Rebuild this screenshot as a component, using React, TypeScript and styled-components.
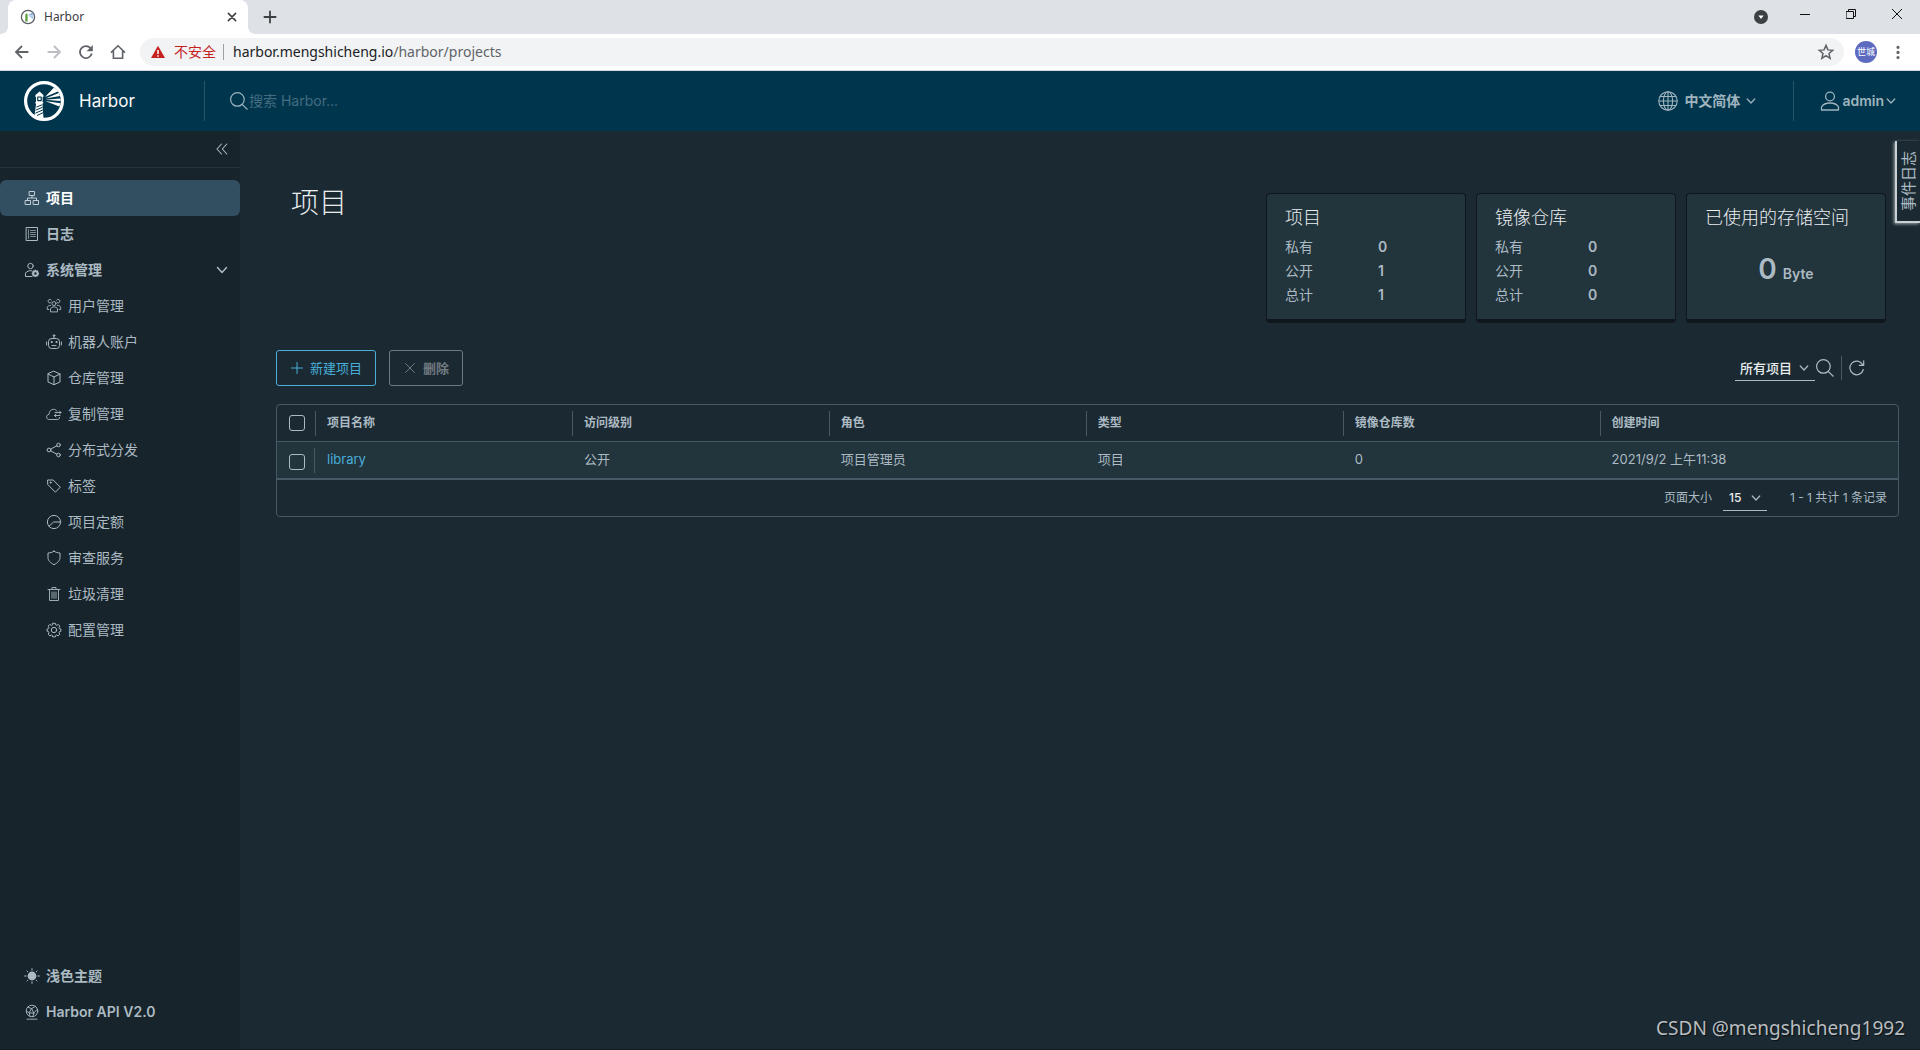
import React from "react";
import styled, { createGlobalStyle, css } from "styled-components";

const color = {
  header: "#00364d",
  side: "#17242b",
  page: "#1b2a32",
  active: "#324f62",
  card: "#22343c",
  cardEdge: "#0f171c",
  line: "#495865",
  text: "#acbac3",
  bright: "#eaedf0",
  link: "#49afd9",
  disabled: "#6f7980",
};

const appFont = `Inter, "Noto Sans CJK SC", sans-serif`;
const chromeFont = `"Noto Sans", "Noto Sans CJK SC", sans-serif`;

const GlobalStyle = createGlobalStyle`
  *, *::before, *::after { box-sizing: border-box; }
  body { margin: 0; background: ${color.page}; color: ${color.text}; font: 400 13px/24px ${appFont}; }
  button, input, select { font: inherit; color: inherit; margin: 0; }
  a { color: inherit; text-decoration: none; }
`;

/* ---------- shared ---------- */

const Svg = styled.svg<{ $size: number }>`
  width: ${(p) => p.$size}px;
  height: ${(p) => p.$size}px;
  flex: none;
  display: block;
  fill: none;
  stroke: currentColor;
  stroke-linecap: round;
  stroke-linejoin: round;
`;

type IconProps = { size?: number; box?: number; stroke?: number; children: React.ReactNode };
const Icon = ({ size = 16, box = 16, stroke = 1, children }: IconProps) => (
  <Svg $size={size} viewBox={`0 0 ${box} ${box}`} strokeWidth={stroke} aria-hidden="true">
    {children}
  </Svg>
);

const Chevron = ({ size = 10 }: { size?: number }) => (
  <Icon size={size} box={8} stroke={1}>
    <path d="M1 2.4 4 5.6 7 2.4" />
  </Icon>
);

const Magnifier = () => (
  <Icon size={20} box={20} stroke={1.2}>
    <circle cx="8.4" cy="8.4" r="6.8" />
    <path d="m13.4 13.6 4.8 4.6" />
  </Icon>
);

const PlainButton = styled.button`
  display: flex;
  align-items: center;
  justify-content: center;
  padding: 0;
  border: 0;
  background: none;
  cursor: pointer;
`;

const Page = styled.div`
  display: flex;
  flex-direction: column;
  min-height: 100vh;
  position: relative;
  border-bottom: 1px solid #131e24;
`;

/* ---------- browser frame ---------- */

const TabStrip = styled.div`
  display: flex;
  align-items: center;
  height: 34px;
  padding-left: 8px;
  background: #dee1e6;
  color: #3c4043;
  font: 400 12px/16px ${chromeFont};
`;

const Tab = styled.div`
  display: flex;
  align-items: center;
  width: 240px;
  height: 34px;
  padding: 0 10px 0 12px;
  gap: 8px;
  background: #fff;
  border-radius: 8px 8px 0 0;
  position: relative;
  &::before, &::after {
    content: "";
    position: absolute;
    bottom: 0;
    width: 8px;
    height: 8px;
  }
  &::before { left: -8px; background: radial-gradient(circle at 0 0, #dee1e6 8px, #fff 8px); }
  &::after { right: -8px; background: radial-gradient(circle at 100% 0, #dee1e6 8px, #fff 8px); }
`;

const TabTitle = styled.span`
  flex: 1;
`;

const NewTab = styled(PlainButton)`
  width: 28px;
  height: 28px;
  margin-left: 8px;
`;

const WindowControls = styled.div`
  display: flex;
  margin-left: auto;
  height: 100%;
  color: #111;
`;

const WindowButton = styled(PlainButton)`
  width: 46px;
  height: 28px;
`;

const CircleButton = styled(PlainButton)`
  width: 42px;
  height: 34px;
`;

const AddressRow = styled.div`
  display: flex;
  align-items: center;
  height: 37px;
  padding-left: 6px;
  padding-right: 6px;
  background: #fff;
  border-bottom: 1px solid #d5d7db;
  color: #5f6368;
  font: 400 14px/20px ${chromeFont};
`;

const NavButton = styled(PlainButton)<{ $dim?: boolean }>`
  width: 32px;
  height: 28px;
  color: ${(p) => (p.$dim ? "#bdbfc2" : "#5f6368")};
`;

const AddressBar = styled.div`
  flex: 1;
  display: flex;
  align-items: center;
  height: 28px;
  margin-left: 6px;
  padding: 0 8px 0 11px;
  border-radius: 14px;
  background: #f1f3f4;
`;

const Insecure = styled.span`
  color: #c5221f;
  padding: 0 7px 0 9px;
  line-height: 16px;
`;

const Address = styled.span`
  flex: 1;
  padding-left: 9px;
  border-left: 1px solid #9aa0a6;
  line-height: 16px;
  b { font-weight: 400; color: #202124; }
`;

const Avatar = styled(PlainButton)`
  width: 22px;
  height: 22px;
  margin: 0 5px 0 11px;
  border-radius: 50%;
  background: #5c6bc0;
  color: #fff;
  font-size: 9px;
  line-height: 22px;
`;

const Favicon = () => (
  <Icon size={16}>
    <circle cx="8" cy="8" r="6.6" stroke="#5a6064" strokeWidth="1.3" />
    <path d="M5.4 5.5 6.5 4.2l1.1 1.3v7H5.2Z" fill="#5f9e41" stroke="none" />
    <path d="m8.6 5.6 4-2.2 1.3 3-5.3.1ZM8.6 7.2l5 .2-.8 2.2Z" fill="#8eb6e0" stroke="none" />
  </Icon>
);

const BrowserFrame = () => (
  <header>
    <TabStrip>
      <Tab>
        <Favicon />
        <TabTitle>Harbor</TabTitle>
        <PlainButton aria-label="关闭标签页">
          <Icon size={12} box={12} stroke={1.6}>
            <path d="m2.4 2.4 7.2 7.2M9.6 2.4 2.4 9.6" />
          </Icon>
        </PlainButton>
      </Tab>
      <NewTab aria-label="新标签页">
        <Icon size={14} box={14} stroke={1.8}>
          <path d="M7 1.4v11.2M1.4 7h11.2" />
        </Icon>
      </NewTab>
      <WindowControls>
        <CircleButton aria-label="标签页列表">
          <Icon size={14} box={14}>
            <circle cx="7" cy="7" r="7" fill="#3c4043" stroke="none" />
            <path d="M4.4 5.4h5.2L7 9Z" fill="#fff" stroke="none" />
          </Icon>
        </CircleButton>
        <WindowButton aria-label="最小化">
          <Icon size={10} box={10}><path d="M0 5.5h10" strokeLinecap="butt" /></Icon>
        </WindowButton>
        <WindowButton aria-label="还原">
          <Icon size={10} box={10}>
            <path d="M.5 2.5h7v7h-7ZM2.5 2.5v-2h7v7h-2" strokeLinejoin="miter" />
          </Icon>
        </WindowButton>
        <WindowButton aria-label="关闭">
          <Icon size={10} box={10}><path d="m0 0 10 10M10 0 0 10" /></Icon>
        </WindowButton>
      </WindowControls>
    </TabStrip>
    <AddressRow>
      <NavButton aria-label="后退">
        <Icon stroke={1.8}><path d="M14.4 8H2M8 2 2 8l6 6" strokeLinecap="butt" strokeLinejoin="miter" /></Icon>
      </NavButton>
      <NavButton aria-label="前进" $dim>
        <Icon stroke={1.8}><path d="M1.6 8H14M8 2l6 6-6 6" strokeLinecap="butt" strokeLinejoin="miter" /></Icon>
      </NavButton>
      <NavButton aria-label="重新加载">
        <Icon stroke={1.8}>
          <path d="M13.8 9.6A6 6 0 1 1 12.4 4" strokeLinecap="butt" />
          <path d="M14.8 1v6.2H8.6Z" fill="currentColor" stroke="none" />
        </Icon>
      </NavButton>
      <NavButton aria-label="主页">
        <Icon stroke={1.6}><path d="M1 8.6 8 1.8l7 6.8M3.4 7v7.2h9.2V7" strokeLinecap="butt" strokeLinejoin="miter" /></Icon>
      </NavButton>
      <AddressBar>
        <Icon size={14} box={14}>
          <path d="M7 .8 14 13H0Z" fill="#c5221f" stroke="none" />
          <path d="M7 5v4M7 10.2v1.6" stroke="#fff" strokeWidth="1.5" strokeLinecap="butt" />
        </Icon>
        <Insecure>不安全</Insecure>
        <Address><b>harbor.mengshicheng.io</b>/harbor/projects</Address>
        <PlainButton aria-label="收藏">
          <Icon size={20} box={20} stroke={1.5}>
            <path d="m10 3.4 1.9 4.5 4.8.4-3.7 3.2 1.1 4.8-4.1-2.6-4.1 2.6L7 11.5 3.3 8.3l4.8-.4Z" strokeLinejoin="miter" />
          </Icon>
        </PlainButton>
      </AddressBar>
      <Avatar aria-label="个人资料">世城</Avatar>
      <NavButton aria-label="菜单">
        <Icon><path d="M8 3.3v.01M8 8.4v.01M8 13.5v.01" strokeWidth="3.2" /></Icon>
      </NavButton>
    </AddressRow>
  </header>
);

/* ---------- application header ---------- */

const Header = styled.header`
  display: flex;
  align-items: center;
  height: 60px;
  background: ${color.header};
`;

const Brand = styled.a`
  display: flex;
  align-items: center;
  gap: 15px;
  width: 205px;
  height: 40px;
  padding-left: 24px;
  border-right: 1px solid #24556b;
  color: #fafafa;
  font-size: 17px;
`;

const SearchBox = styled.label`
  flex: 1;
  display: flex;
  align-items: center;
  padding-left: 24px;
  color: #9cb2bd;
`;

const SearchInput = styled.input`
  width: 240px;
  padding: 0;
  border: 0;
  outline: 0;
  background: none;
  font-size: 14px;
  line-height: 24px;
  &::placeholder { color: #456c80; opacity: 1; }
`;

const HeaderMenu = styled(PlainButton)<{ $user?: boolean }>`
  height: 40px;
  gap: 6px;
  font-size: 14px;
  font-weight: 600;
  color: #9fb4be;
  ${(p) =>
    p.$user
      ? css`
          border-left: 1px solid #24556b;
          padding: 0 24px 0 26px;
          gap: 2px;
        `
      : css`
          padding: 0 37px 0 0;
        `}
`;

const HarborLogo = () => (
  <Icon size={40} box={40}>
    <circle cx="20" cy="20" r="18.4" stroke="#fff" strokeWidth="3.2" />
    <path d="M15.600 10.400 11.400 14v2h.6v5h-.7v1.500h.8l-1.700 13.200q4.600 3 9.200 2.700L18.400 22.500h.8V21h-.6v-5h.8v-2Z" fill="#fff" stroke="none" />
    <path d="M13.800 16h3.400v3.600h-3.400Z" stroke="#00364d" strokeWidth="1.200" />
    <path d="m12.600 26 5-2M12.200 29l6-2.600M11.800 32l6.800-3M13.400 34.400l5.400-2.600" stroke="#00364d" />
    <path d="m21 16 9-9.500 4.500 3.700ZM21.500 17.400l13.300-5.400 1.200 3ZM21.500 18.700l15-1.200v2.400ZM21.200 20l15.300 2.200-1.200 3.400Z" fill="#fff" stroke="none" />
  </Icon>
);

const AppHeader = () => (
  <Header>
    <Brand href="#"><HarborLogo />Harbor</Brand>
    <SearchBox>
      <Magnifier />
      <SearchInput aria-label="搜索" placeholder="搜索 Harbor..." />
    </SearchBox>
    <HeaderMenu>
      <Icon size={20} box={20} stroke={1.1}>
        <circle cx="10" cy="10" r="9.2" />
        <ellipse cx="10" cy="10" rx="4.6" ry="9.2" />
        <path d="M10 .8v18.400M2.300 5.500h15.400M.8 10h18.400M2.300 14.500h15.400" />
      </Icon>
      中文简体
      <Chevron />
    </HeaderMenu>
    <HeaderMenu $user>
      <Icon size={20} box={20} stroke={1.3}>
        <circle cx="10" cy="5.5" r="4.4" />
        <path d="M1.500 19v-3c1.500-2.800 5-4 8.500-4s7 1.200 8.500 4v3Z" />
      </Icon>
      admin
      <Chevron />
    </HeaderMenu>
  </Header>
);

/* ---------- sidebar ---------- */

const Body = styled.div`
  flex: 1;
  display: flex;
`;

const Side = styled.nav`
  display: flex;
  flex-direction: column;
  flex: none;
  width: 240px;
  padding-bottom: 19px;
  background: ${color.side};
`;

const CollapseRow = styled.div`
  display: flex;
  justify-content: flex-end;
  height: 37px;
  padding-right: 10px;
  margin-bottom: 12px;
  border-bottom: 1px solid #23343d;
`;

const NavItem = styled.a<{ $sub?: boolean; $active?: boolean }>`
  display: flex;
  align-items: center;
  gap: 6px;
  height: 36px;
  padding: 0 12px 0 ${(p) => (p.$sub ? 46 : 24)}px;
  font-size: 14px;
  font-weight: ${(p) => (p.$sub ? 400 : p.$active ? 700 : 600)};
  border-radius: 6px;
  ${(p) =>
    p.$active &&
    css`
      background: ${color.active};
      color: #fff;
      svg { color: #c3ced5; }
    `}
`;

const Grow = styled.span`
  flex: 1;
`;

const SideFooter = styled.div`
  margin-top: auto;
`;

const icons = {
  projects: (
    <Icon>
      <path d="M5.500 1.500h5v4h-5ZM1.500 10.500h5v4h-5ZM9.500 10.500h5v4h-5ZM8 5.500v2.300M3.500 10V8h9v2" strokeLinejoin="miter" />
    </Icon>
  ),
  logs: (
    <Icon>
      <path d="M2.500 1.500h11v13h-11Z" strokeLinejoin="miter" />
      <path d="M4.500 3.500v9M6.500 4.500h5M6.500 6.500h5M6.500 8.500h5M6.500 10.500h5" strokeWidth=".7" />
    </Icon>
  ),
  admin: (
    <Icon>
      <circle cx="6.500" cy="4" r="2.700" />
      <path d="M8 14.500H1.500v-3.400C2.700 9.300 5 8.500 7.500 8.700" />
      <circle cx="11.400" cy="11.400" r="2.200" strokeWidth="1.900" />
      <path d="M11.400 7.700v1.500M11.400 13.600v1.500M7.700 11.400h1.500M13.600 11.400h1.500M8.800 8.800l1 1M13 13l1 1M14 8.800l-1 1M9.800 13l-1 1" strokeWidth="1.500" strokeLinecap="butt" />
    </Icon>
  ),
  users: (
    <Icon stroke={0.9}>
      <circle cx="8" cy="5.600" r="2" />
      <path d="M4.500 13.500v-2.700c.6-1.300 2-1.900 3.500-1.900s2.900.6 3.500 1.900v2.700Z" />
      <path d="M5 4.600A1.800 1.800 0 1 1 5.400 2.200M11 4.600a1.800 1.800 0 1 0-.4-2.400M4.600 7.400C3 7.300 1.800 8 1.300 9.200v2.300h1.500M11.400 7.400c1.600-.1 2.800.6 3.300 1.800v2.300h-1.500" />
    </Icon>
  ),
  robot: (
    <Icon>
      <rect x="2.500" y="4.500" width="11" height="10" rx="3" />
      <path d="M8 4.500V2M.6 8v3M15.400 8v3M6 11.600h4" />
      <circle cx="8" cy="1.500" r=".8" />
      <circle cx="5.600" cy="8" r=".6" fill="currentColor" />
      <circle cx="10.400" cy="8" r=".6" fill="currentColor" />
    </Icon>
  ),
  cube: (
    <Icon>
      <path d="m8 1.300 6 2.700v8L8 14.700 2 12V4ZM2 4l6 3 6-3M8 7v7.700" />
    </Icon>
  ),
  replicate: (
    <Icon stroke={0.9}>
      <path d="M13.500 11.500c0 1.500-1 2-2.200 2H3.200C1.700 13.500.6 12.300.6 11s1-2.400 2.400-2.500C3 5.500 5 3.300 7.500 3.300c1.500 0 2.700.7 3.400 1.800" />
      <path d="M9 6.500h6M13.500 5 15 6.500 13.500 8M14 9.500H8.500M10 8 8.500 9.500 10 11" />
    </Icon>
  ),
  share: (
    <Icon>
      <circle cx="3" cy="8" r="1.900" />
      <circle cx="12.500" cy="3" r="1.800" />
      <circle cx="12.500" cy="13" r="1.800" />
      <path d="m4.700 7.100 6.200-3.300M4.700 8.900l6.200 3.300" />
    </Icon>
  ),
  tag: (
    <Icon>
      <path d="M2 2h5.200l7.100 7.200-4.900 5L2 6.800Z" />
      <circle cx="4.600" cy="4.600" r=".6" />
    </Icon>
  ),
  quota: (
    <Icon>
      <circle cx="8" cy="8" r="6.600" />
      <path d="M3 12.300 7.500 8h7" />
    </Icon>
  ),
  shield: (
    <Icon>
      <path d="M8 1.200c1.800 1.200 3.800 1.700 6 1.800v4.500c0 3.200-2.600 5.500-6 7.200-3.400-1.700-6-4-6-7.200V3c2.200-.1 4.200-.6 6-1.800Z" />
    </Icon>
  ),
  trash: (
    <Icon>
      <path d="M2 3.500h12M3.500 3.500v11h9v-11M6 3.300V1.500h4v1.800M6 6v6.300M8 6v6.300M10 6v6.300" strokeWidth=".9" />
    </Icon>
  ),
  gear: (
    <Icon>
      <circle cx="8" cy="8" r="2.700" />
      <path d="m6.700 1.300h2.600l.4 1.600 1 .4 1.500-.9 1.600 1.700-.8 1.500.4 1 1.500.4v2.300l-1.500.4-.4 1 .8 1.500-1.700 1.700-1.400-.9-1 .4-.4 1.500H6.700l-.4-1.500-1-.4-1.500.9-1.600-1.700.8-1.500-.4-1-1.500-.4V7l1.500-.4.4-1-.8-1.500 1.600-1.700 1.500.9 1-.4Z" />
    </Icon>
  ),
  sun: (
    <Icon>
      <circle cx="8" cy="8" r="4.400" fill="currentColor" stroke="none" />
      <path d="M8 .6v1.600M8 13.800v1.600M.6 8h1.600M13.800 8h1.600M3 3l.8.8M12.200 12.200l.8.8M13 3l-.8.800M3 13l.8-.8" />
    </Icon>
  ),
  api: (
    <Icon stroke={0.9}>
      <circle cx="8" cy="7" r="5.800" />
      <path d="M3 15.200h10M4 3.200l3.600 1.400 3.600-2.200M7.600 4.600 5.200 8.800l4.600.4 3-3.500M2.600 7.200l2.600 1.600.8 3.600M9.800 9.200l-1 3.500M7.600 4.600l2.200 4.600" />
    </Icon>
  ),
};

const adminItems: [React.ReactNode, string][] = [
  [icons.users, "用户管理"],
  [icons.robot, "机器人账户"],
  [icons.cube, "仓库管理"],
  [icons.replicate, "复制管理"],
  [icons.share, "分布式分发"],
  [icons.tag, "标签"],
  [icons.quota, "项目定额"],
  [icons.shield, "审查服务"],
  [icons.trash, "垃圾清理"],
  [icons.gear, "配置管理"],
];

const Sidebar = () => (
  <Side>
    <CollapseRow>
      <PlainButton aria-label="收起">
        <Icon stroke={1.1}><path d="M7.500 3 3 8l4.500 5M12.800 3 8.300 8l4.500 5" /></Icon>
      </PlainButton>
    </CollapseRow>
    <NavItem href="#" $active>{icons.projects}项目</NavItem>
    <NavItem href="#">{icons.logs}日志</NavItem>
    <NavItem href="#">
      {icons.admin}
      <Grow>系统管理</Grow>
      <Chevron size={12} />
    </NavItem>
    {adminItems.map(([icon, label]) => (
      <NavItem key={label} href="#" $sub>{icon}{label}</NavItem>
    ))}
    <SideFooter>
      <NavItem href="#">{icons.sun}浅色主题</NavItem>
      <NavItem href="#">{icons.api}Harbor API V2.0</NavItem>
    </SideFooter>
  </Side>
);

/* ---------- project list ---------- */

const Main = styled.main`
  flex: 1;
  min-width: 0;
  padding: 52px 21px 48px 36px;
`;

const TitleRow = styled.div`
  display: flex;
  justify-content: space-between;
  padding: 0 13px 0 15px;
`;

const Title = styled.h1`
  margin: 0;
  font-size: 28px;
  font-weight: 300;
  line-height: 40px;
  color: ${color.bright};
`;

const Cards = styled.div`
  display: flex;
  gap: 10px;
  margin-top: 10px;
`;

const Card = styled.section`
  width: 200px;
  padding: 11px 18px 12px;
  border: 1px solid ${color.cardEdge};
  border-bottom-width: 4px;
  border-radius: 4px;
  background: ${color.card};
`;

const CardTitle = styled.h2`
  margin: 0 0 4px;
  font-size: 18px;
  font-weight: 300;
  line-height: 26px;
  white-space: nowrap;
  color: ${color.bright};
`;

const Stats = styled.dl`
  display: grid;
  grid-template-columns: 93px 1fr;
  margin: 0;
  font-size: 14px;
  dd { margin: 0; font-weight: 600; }
`;

const Storage = styled.p`
  display: flex;
  align-items: baseline;
  justify-content: center;
  gap: 6px;
  margin: 0;
  padding-top: 14px;
  font-size: 14px;
  font-weight: 600;
  line-height: 40px;
  strong { font-size: 28px; font-weight: 600; }
`;

const Toolbar = styled.div`
  display: flex;
  align-items: center;
  gap: 13px;
  margin: 27px 0 18px;
`;

const ActionButton = styled.button`
  display: flex;
  align-items: center;
  gap: 6px;
  height: 36px;
  padding: 0 13px;
  border: 1px solid ${color.link};
  border-radius: 3px;
  background: none;
  color: ${color.link};
  &:disabled { border-color: ${color.disabled}; color: ${color.disabled}; font-weight: 600; }
`;

const Filters = styled.div`
  display: flex;
  align-items: center;
  margin-left: auto;
  padding-right: 33px;
`;

const SelectWrap = styled.span<{ $pad: number; $width: number }>`
  display: grid;
  align-items: center;
  width: ${(p) => p.$width}px;
  border-bottom: 1px solid ${color.text};
  select {
    grid-area: 1 / 1;
    appearance: none;
    width: 100%;
    height: 24px;
    padding: 0 0 0 ${(p) => p.$pad}px;
    border: 0;
    outline: 0;
    background: none;
    color: ${color.bright};
    font-weight: 500;
  }
  svg { grid-area: 1 / 1; justify-self: end; margin-right: 6px; pointer-events: none; }
`;

const RefreshButton = styled(PlainButton)`
  height: 24px;
  margin-left: 6px;
  padding-left: 6px;
  border-left: 1px solid ${color.line};
`;

const Grid = styled.div`
  border: 1px solid ${color.line};
  border-radius: 4px;
`;

const Table = styled.table`
  width: 100%;
  table-layout: fixed;
  border-collapse: separate;
  border-spacing: 0;
  text-align: left;
  th, td { height: 37px; padding: 0; border-bottom: 1px solid ${color.line}; }
  th { font-size: 12px; font-weight: 600; }
  td { height: 38px; padding: 0 0 2px 12px; background: ${color.card}; border-bottom-width: 2px; }
  td:first-child { padding: 0; }
  th:first-child { width: 38px; }
  th { width: 15.85%; }
  th:last-child { width: auto; }
`;

const HeadLabel = styled.div`
  height: 25px;
  padding-left: 11px;
  border-left: 1px solid ${color.line};
`;

const TickCell = styled.div<{ $ruled?: boolean }>`
  display: flex;
  align-items: ${(p) => (p.$ruled ? "flex-end" : "center")};
  height: 25px;
  padding-left: 12px;
  padding-bottom: ${(p) => (p.$ruled ? 3 : 1)}px;
  border-right: 1px solid ${(p) => (p.$ruled ? color.line : "transparent")};
`;

const Tick = styled.input`
  appearance: none;
  width: 16px;
  height: 16px;
  border: 1px solid ${color.text};
  border-radius: 3px;
`;

const ProjectLink = styled.a`
  color: ${color.link};
`;

const GridFooter = styled.div`
  display: flex;
  align-items: center;
  justify-content: flex-end;
  height: 36px;
  padding-right: 11px;
  font-size: 12px;
`;

const PageSize = styled.label`
  display: flex;
  align-items: center;
  gap: 11px;
  margin-right: 23px;
`;

const columns = ["项目名称", "访问级别", "角色", "类型", "镜像仓库数", "创建时间"];

const StatCard = ({ title, values }: { title: string; values: number[] }) => (
  <Card>
    <CardTitle>{title}</CardTitle>
    <Stats>
      {["私有", "公开", "总计"].map((label, i) => (
        <React.Fragment key={label}>
          <dt>{label}</dt>
          <dd>{values[i]}</dd>
        </React.Fragment>
      ))}
    </Stats>
  </Card>
);

const Projects = () => (
  <Main>
    <TitleRow>
      <Title>项目</Title>
      <Cards>
        <StatCard title="项目" values={[0, 1, 1]} />
        <StatCard title="镜像仓库" values={[0, 0, 0]} />
        <Card>
          <CardTitle>已使用的存储空间</CardTitle>
          <Storage><strong>0</strong>Byte</Storage>
        </Card>
      </Cards>
    </TitleRow>
    <Toolbar>
      <ActionButton>
        <Icon size={14} box={14}><path d="M7 1.500v11M1.500 7h11" /></Icon>
        新建项目
      </ActionButton>
      <ActionButton disabled>
        <Icon size={14} box={14}><path d="m2.500 2.500 9 9M11.500 2.500l-9 9" /></Icon>
        删除
      </ActionButton>
      <Filters>
        <SelectWrap $pad={5} $width={80}>
          <select aria-label="项目类型"><option>所有项目</option></select>
          <Chevron />
        </SelectWrap>
        <PlainButton aria-label="搜索"><Magnifier /></PlainButton>
        <RefreshButton aria-label="刷新">
          <Icon size={18} box={18} stroke={1.2}>
            <path d="M15.300 10.500A6.800 6.800 0 1 1 14.600 5.600M15.700 1.800v4.500h-4.400" />
          </Icon>
        </RefreshButton>
      </Filters>
    </Toolbar>
    <Grid>
      <Table>
        <thead>
          <tr>
            <th><TickCell><Tick type="checkbox" aria-label="全选" /></TickCell></th>
            {columns.map((name) => (
              <th key={name} scope="col"><HeadLabel>{name}</HeadLabel></th>
            ))}
          </tr>
        </thead>
        <tbody>
          <tr>
            <td><TickCell $ruled><Tick type="checkbox" aria-label="选择 library" /></TickCell></td>
            <td><ProjectLink href="#">library</ProjectLink></td>
            <td>公开</td>
            <td>项目管理员</td>
            <td>项目</td>
            <td>0</td>
            <td>2021/9/2 上午11:38</td>
          </tr>
        </tbody>
      </Table>
      <GridFooter>
        <PageSize>
          页面大小
          <SelectWrap as="span" $pad={6} $width={44}>
            <select><option>15</option></select>
            <Chevron />
          </SelectWrap>
        </PageSize>
        1 - 1 共计 1 条记录
      </GridFooter>
    </Grid>
  </Main>
);

/* ---------- overlays ---------- */

const EventLog = styled.button`
  position: absolute;
  top: 141px;
  right: 0;
  width: 25px;
  height: 82px;
  padding: 0;
  border: 0;
  border-left: 2px solid #c9d0d4;
  border-bottom: 2px solid #c9d0d4;
  box-shadow: -1px 1px 3px #9aa5ab;
  background: ${color.page};
  font-size: 15px;
  line-height: 23px;
  cursor: pointer;
  span {
    display: block;
    height: 80px;
    writing-mode: vertical-rl;
    text-orientation: sideways;
    transform: rotate(180deg);
    text-align: center;
  }
`;

const Watermark = styled.div`
  position: absolute;
  right: 15px;
  bottom: 7px;
  color: #b9bdc0;
  font: 400 19px/28px "Noto Sans", sans-serif;
  text-shadow: 1px 1px 1px #0b1114;
`;

export default function App() {
  return (
    <Page>
      <GlobalStyle />
      <BrowserFrame />
      <AppHeader />
      <Body>
        <Sidebar />
        <Projects />
      </Body>
      <EventLog><span>事件日志</span></EventLog>
      <Watermark>CSDN @mengshicheng1992</Watermark>
    </Page>
  );
}
